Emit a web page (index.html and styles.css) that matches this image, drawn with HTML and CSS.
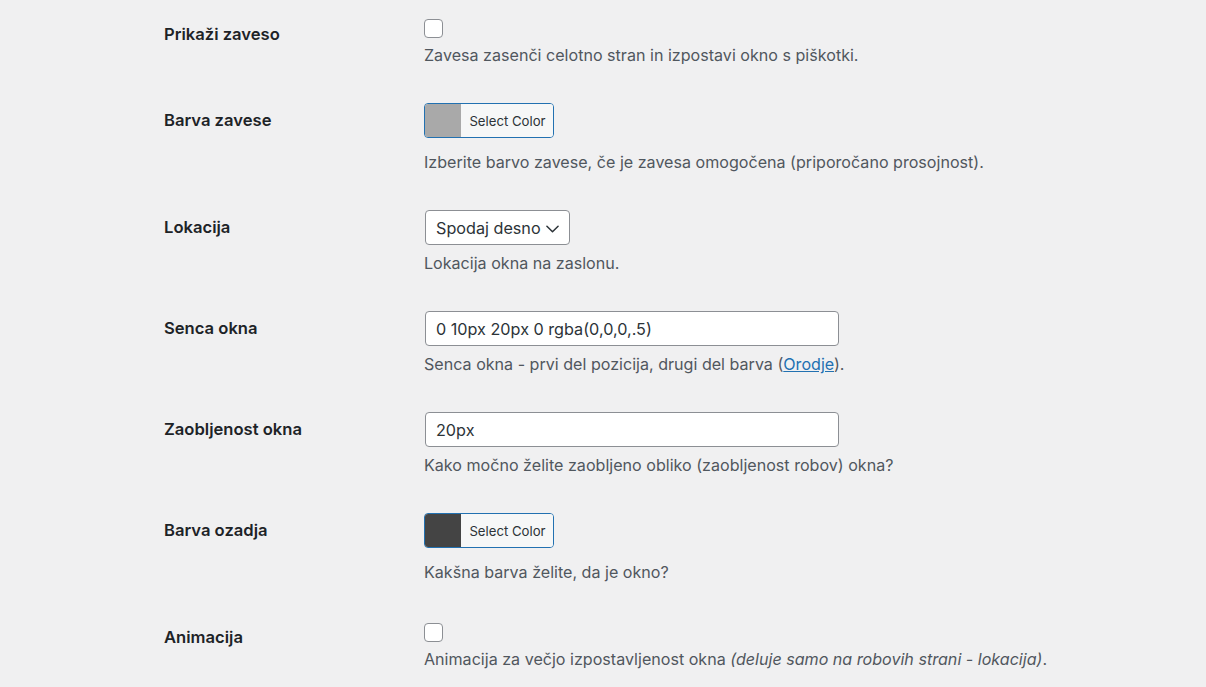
FILE: index.html
```html
<!DOCTYPE html>
<html lang="sl">
<head>
<meta charset="utf-8">
<title>Nastavitve</title>
<link rel="stylesheet" href="styles.css">
</head>
<body>
<div class="form-table">
  <div class="row first">
    <div class="th">Prikaži zaveso</div>
    <div class="td">
      <span class="checkbox"></span>
      <p class="description gap-s">Zavesa zasenči celotno stran in izpostavi okno s piškotki.</p>
    </div>
  </div>
  <div class="row">
    <div class="th">Barva zavese</div>
    <div class="td">
      <button class="color-result"><span class="swatch swatch-light"></span><span class="color-text">Select Color</span></button>
      <p class="description gap-l">Izberite barvo zavese, če je zavesa omogočena (priporočano prosojnost).</p>
    </div>
  </div>
  <div class="row">
    <div class="th">Lokacija</div>
    <div class="td">
      <div class="select">Spodaj desno
        <svg class="chevron" viewBox="0 0 14 8" width="13" height="8"><path d="M1 1l6 6 6-6" fill="none" stroke="#2c3338" stroke-width="1.6" stroke-linecap="round" stroke-linejoin="round"/></svg>
      </div>
      <p class="description gap-m">Lokacija okna na zaslonu.</p>
    </div>
  </div>
  <div class="row">
    <div class="th">Senca okna</div>
    <div class="td">
      <div class="text-input">0 10px 20px 0 rgba(0,0,0,.5)</div>
      <p class="description gap-m">Senca okna - prvi del pozicija, drugi del barva (<a href="#">Orodje</a>).</p>
    </div>
  </div>
  <div class="row">
    <div class="th">Zaobljenost okna</div>
    <div class="td">
      <div class="text-input">20px</div>
      <p class="description gap-m">Kako močno želite zaobljeno obliko (zaobljenost robov) okna?</p>
    </div>
  </div>
  <div class="row">
    <div class="th">Barva ozadja</div>
    <div class="td">
      <button class="color-result"><span class="swatch swatch-dark"></span><span class="color-text">Select Color</span></button>
      <p class="description gap-l">Kakšna barva želite, da je okno?</p>
    </div>
  </div>
  <div class="row">
    <div class="th th-last">Animacija</div>
    <div class="td">
      <span class="checkbox checkbox-last"></span>
      <p class="description gap-s">Animacija za večjo izpostavljenost okna <em>(deluje samo na robovih strani - lokacija)</em>.</p>
    </div>
  </div>
</div>
</body>
</html>
```
FILE: styles.css
```css
html, body {
  margin: 0;
  padding: 0;
  background: #f0f0f1;
}
body {
  font-family: Inter, "Noto Sans", "Liberation Sans", sans-serif;
  color: #1d2327;
  height: 687px;
  overflow: hidden;
}
.form-table {
  padding-left: 164px;
  margin-top: -1px;
}
.row {
  display: flex;
}
.th {
  width: 260px;
  flex: none;
  padding-top: 25px;
  font-size: 16.6px;
  line-height: 20px;
  font-weight: 600;
  color: #1d2327;
}
.th-last {
  padding-top: 25px;
}
.td {
  padding: 18px 0;
}
.checkbox {
  display: block;
  width: 17px;
  height: 17px;
  margin-top: 2px;
  border: 1px solid #8c8f94;
  border-radius: 4px;
  background: #fff;
}
.checkbox-last {
  margin-top: 3px;
}
.description {
  margin: 0;
  font-size: 16.1px;
  line-height: 24px;
  color: #50575e;
}
.description a {
  color: #2271b1;
  text-decoration: underline;
}
.description em {
  font-style: italic;
}
.gap-s { margin-top: 5px; }
.gap-m { margin-top: 6px; }
.gap-l { margin-top: 12px; }
.color-result {
  display: flex;
  align-items: stretch;
  width: 130px;
  height: 35px;
  padding: 0;
  margin: 0;
  border: 1px solid #2271b1;
  border-radius: 4px;
  overflow: hidden;
  background: #f6f7f7;
  font-family: inherit;
  cursor: pointer;
}
.swatch {
  width: 36px;
  flex: none;
}
.swatch-light { background: #a9a9a9; }
.swatch-dark { background: #444; }
.color-text {
  flex: 1;
  display: flex;
  align-items: center;
  justify-content: center;
  font-size: 13.2px;
  color: #2c3338;
  background: #f6f7f7;
  padding-left: 1px;
}
.select {
  display: flex;
  align-items: center;
  box-sizing: border-box;
  width: 145px;
  height: 35px;
  margin-left: 1px;
  padding-left: 10px;
  border: 1px solid #8c8f94;
  border-radius: 4px;
  background: #fff;
  font-size: 16.2px;
  color: #2c3338;
  position: relative;
}
.chevron {
  position: absolute;
  right: 10px;
  top: 14px;
}
.text-input {
  display: flex;
  align-items: center;
  box-sizing: border-box;
  width: 414px;
  height: 35px;
  margin-left: 1px;
  padding-left: 10px;
  border: 1px solid #8c8f94;
  border-radius: 4px;
  background: #fff;
  font-size: 16.2px;
  color: #2c3338;
}
```
